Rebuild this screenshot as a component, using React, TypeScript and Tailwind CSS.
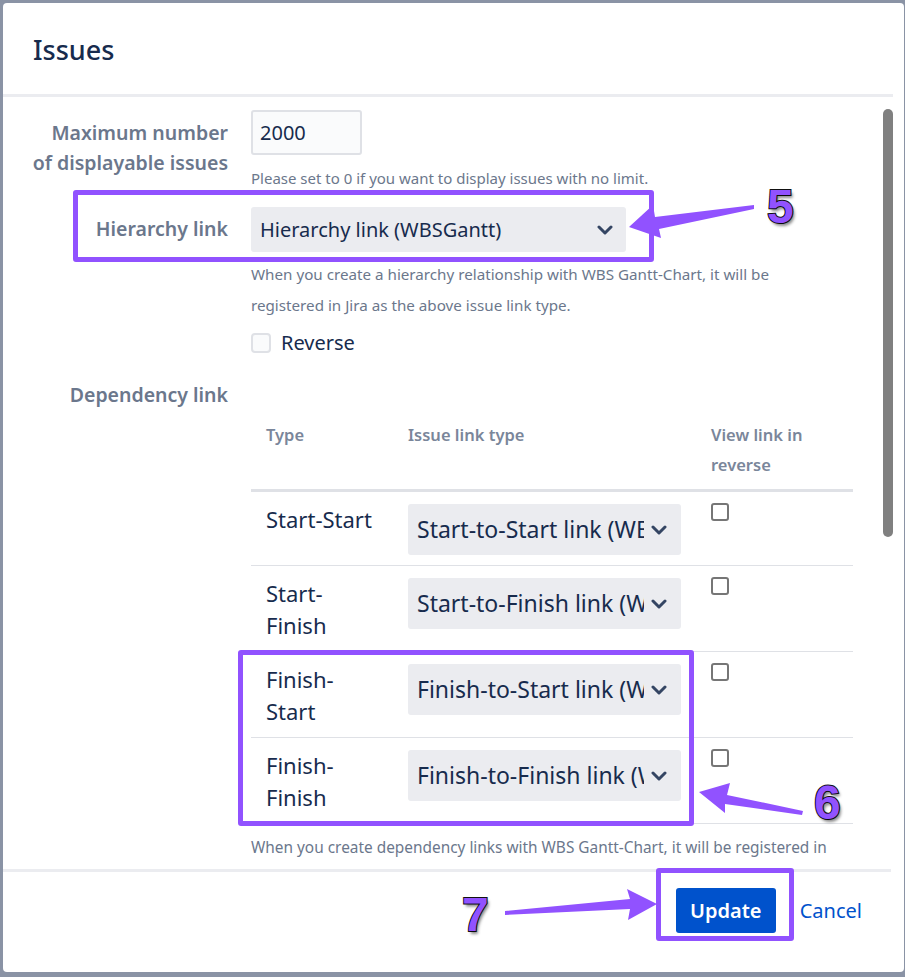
import React from 'react';

function Chevron() {
  return (
    <svg width="16" height="10" viewBox="0 0 16 10" className="shrink-0">
      <path d="M2 2l6 6 6-6" fill="none" stroke="#344563" strokeWidth="3" strokeLinecap="round" strokeLinejoin="round" />
    </svg>
  );
}

function Select({ value, className = '' }: { value: string; className?: string }) {
  return (
    <div className={`flex items-center gap-[7px] rounded-[3px] bg-[#ebecf0] pl-[9px] text-[#172b4d] ${className}`}>
      <span className="min-w-0 flex-1 overflow-hidden whitespace-nowrap">{value}</span>
      <Chevron />
    </div>
  );
}

function Check() {
  return <div className="h-[18px] w-[18px] rounded-[3px] border-2 border-[#767676] bg-white" />;
}

const rows: { type: React.ReactNode; link: string }[] = [
  { type: 'Start-Start', link: 'Start-to-Start link (WBSGantt)' },
  { type: <>Start-<br />Finish</>, link: 'Start-to-Finish link (WBSGantt)' },
  { type: <>Finish-<br />Start</>, link: 'Finish-to-Start link (WBSGantt)' },
  { type: <>Finish-<br />Finish</>, link: 'Finish-to-Finish link (WBSGantt)' },
];

function Num({ n, className }: { n: string; className: string }) {
  return (
    <div
      className={`absolute font-['Liberation_Sans',sans-serif] text-[48px] leading-none font-bold text-[#9152ff] [-webkit-text-stroke:2px_#111] [paint-order:stroke_fill] [text-shadow:2px_3px_3px_rgba(0,0,0,0.45)] ${className}`}
    >
      {n}
    </div>
  );
}

export default function App() {
  return (
    <div className="relative h-[977px] w-[905px] overflow-hidden bg-[#8a93a5] pt-[3px] pl-[3px] font-['Noto_Sans',sans-serif]">
      <div className="flex h-[969px] w-[901px] flex-col overflow-hidden rounded-[4px] bg-white">
        {/* header */}
        <div className="flex h-[91px] shrink-0 items-center pl-[30px] pt-[3px]">
          <h1 className="text-[27px] font-medium text-[#172b4d]">Issues</h1>
        </div>
        <div className="mr-[11px] h-[3px] shrink-0 bg-[#ebecf0]" />

        {/* body */}
        <div className="flex h-[772px] shrink-0 overflow-hidden">
          <div className="min-w-0 flex-1 pt-[13px]">
            <div className="grid grid-cols-[225px_602px] gap-x-[23px]">
              {/* max issues */}
              <div className="pt-[8px] text-right text-[19.5px] leading-[30px] font-semibold text-[#6b778c]">
                Maximum number
                <br />
                of displayable issues
              </div>
              <div>
                <div className="flex h-[45px] w-[111px] items-center rounded-[3px] border-2 border-[#dfe1e6] bg-[#fafbfc] pl-[7px] text-[20px] text-[#172b4d]">
                  2000
                </div>
                <div className="mt-[8px] text-[15px] leading-[30px] text-[#6b778c]">
                  Please set to 0 if you want to display issues with no limit.
                </div>
              </div>

              {/* hierarchy */}
              <div className="pt-[21px] text-right text-[19.5px] leading-[30px] font-semibold text-[#6b778c]">Hierarchy link</div>
              <div className="pt-[14px]">
                <Select value="Hierarchy link (WBSGantt)" className="h-[45px] w-[375px] pr-[13px] text-[20px]" />
                <div className="mt-[7px] text-[15.2px] leading-[31px] whitespace-nowrap text-[#6b778c]">
                  When you create a hierarchy relationship with WBS Gantt-Chart, it will be
                  <br />
                  registered in Jira as the above issue link type.
                </div>
                <div className="mt-[10px] flex h-[24px] items-center gap-[10px]">
                  <div className="h-[20px] w-[20px] rounded-[4px] border-2 border-[#dfe1e6] bg-[#fafbfc]" />
                  <span className="text-[20px] text-[#172b4d]">Reverse</span>
                </div>
              </div>

              {/* dependency */}
              <div className="pt-[25px] text-right text-[19.5px] leading-[30px] font-semibold text-[#6b778c]">Dependency link</div>
              <div className="pt-[55px]">
                <div className="grid grid-cols-[142px_303px_157px]">
                  <div className="border-b-[3px] border-[#dfe1e6] pt-[10px] pb-[9px] pl-[15px] text-[16.5px] leading-[30px] font-semibold text-[#7a869a]">Type</div>
                  <div className="border-b-[3px] border-[#dfe1e6] pt-[10px] pb-[9px] pl-[15px] text-[16.5px] leading-[30px] font-semibold text-[#7a869a]">Issue link type</div>
                  <div className="border-b-[3px] border-[#dfe1e6] pt-[10px] pb-[9px] pl-[15px] text-[16.5px] leading-[30px] font-semibold text-[#7a869a]">
                    View link in
                    <br />
                    reverse
                  </div>
                  {rows.map((r, i) => (
                    <React.Fragment key={i}>
                      <div className="border-b border-[#dfe1e6] pt-[12px] pb-[10px] pl-[15px] text-[22px] leading-[31.5px] whitespace-nowrap text-[#172b4d]">
                        {r.type}
                      </div>
                      <div className="border-b border-[#dfe1e6] pt-[12px] pb-[10px] pl-[15px]">
                        <Select value={r.link} className="h-[51px] w-[273px] pr-[14px] text-[23px]" />
                      </div>
                      <div className="border-b border-[#dfe1e6] pt-[11px] pl-[15px]">
                        <Check />
                      </div>
                    </React.Fragment>
                  ))}
                </div>
                <div className="mt-[8px] text-[15.4px] leading-[31px] whitespace-nowrap text-[#6b778c]">
                  When you create dependency links with WBS Gantt-Chart, it will be registered in
                  <br />
                  Jira as the above issue link type.
                </div>
              </div>
            </div>
          </div>
          {/* scrollbar */}
          <div className="mr-[11px] w-[10px] shrink-0 pt-[12px]">
            <div className="h-[428px] w-[10px] rounded-full bg-[#808080]" />
          </div>
        </div>

        <div className="mr-[13px] h-[3px] shrink-0 bg-[#ebecf0]" />

        {/* footer */}
        <div className="flex flex-1 items-start justify-end gap-[24px] pt-[16px] pr-[42px]">
          <button className="h-[45px] w-[100px] rounded-[3px] bg-[#0052cc] text-[20px] font-semibold text-white">Update</button>
          <span className="mt-[8px] text-[20px] leading-[30px] text-[#0052cc]">Cancel</span>
        </div>
      </div>

      {/* annotations */}
      <div className="absolute top-[190px] left-[73px] h-[72px] w-[581px] rounded-[3px] border-[5px] border-[#9152ff]" />
      <div className="absolute top-[650px] left-[238px] h-[176px] w-[456px] rounded-[3px] border-[5px] border-[#9152ff]" />
      <div className="absolute top-[868px] left-[656px] h-[73px] w-[138px] rounded-[3px] border-[5px] border-[#9152ff]" />
      <svg className="pointer-events-none absolute inset-0" width="905" height="977">
        <polygon points="629,227 653,205 655,217 754,205 754,209 659,229 661,238" fill="#9152ff" />
        <polygon points="699,792 730,783 727,795 803,811 802,815 725,804 725,813" fill="#9152ff" />
        <polygon points="657,904 627,889 630,899 505,911 505,915 630,909 628,920" fill="#9152ff" />
      </svg>
      <Num n="5" className="top-[183px] left-[767px]" />
      <Num n="6" className="top-[779px] left-[814px]" />
      <Num n="7" className="top-[891px] left-[462px]" />
    </div>
  );
}
